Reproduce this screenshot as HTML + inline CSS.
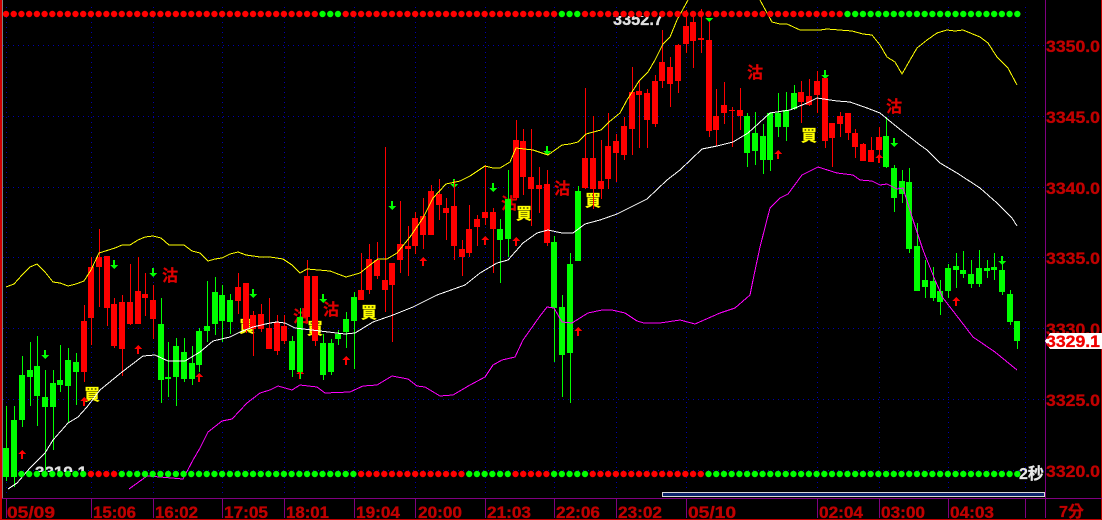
<!DOCTYPE html>
<html lang="zh-Hant"><head><meta charset="utf-8"><title>Chart</title>
<style>
html,body{margin:0;padding:0;background:#000;width:1102px;height:520px;overflow:hidden}
svg{display:block}
.ax{font:bold 17px "Liberation Sans",sans-serif;fill:#c00000;stroke:#c00000;stroke-width:.35}
.w{font:bold 17px "Liberation Sans",sans-serif;fill:#e0e0e0;stroke:#e0e0e0;stroke-width:.3}
.s{font:bold 16px "Liberation Sans","Noto Sans CJK TC",sans-serif;stroke-width:.25}
.l{fill:none;stroke-width:1}
</style></head><body>
<svg width="1102" height="520" viewBox="0 0 1102 520" xmlns="http://www.w3.org/2000/svg">
<defs><clipPath id="c"><rect x="600" y="16" width="80" height="12"/></clipPath><clipPath id="d"><rect x="30" y="460" width="70" height="12"/></clipPath></defs>
<rect width="1102" height="520" fill="#000"/>
<g shape-rendering="crispEdges">
<path stroke="#0000b0" stroke-width="1" stroke-dasharray="1 4" fill="none" d="M3 45.5H1045M3 116.5H1045M3 187.5H1045M3 257.5H1045M3 328.5H1045M3 399.5H1045M3 470.5H1045M6.5 7V496M91.5 7V496M153.5 7V496M222.5 7V496M284.5 7V496M354.5 7V496M415.5 7V496M485.5 7V496M554.5 7V496M616.5 7V496M686.5 7V496M817.5 7V496M879.5 7V496M948.5 7V496M1025.5 7V496"/>
</g>
<text class="w" x="613" y="25" textLength="50" lengthAdjust="spacingAndGlyphs" clip-path="url(#c)">3352.7</text>
<text class="w" x="35" y="478" textLength="52" lengthAdjust="spacingAndGlyphs" clip-path="url(#d)">3319.1</text>

<g class="s">
<g fill="#e00000" stroke="#e00000">
<text x="162" y="281">沽</text><text x="293" y="322">沽</text><text x="323" y="315">沽</text><text x="501" y="209">沽</text><text x="554" y="194">沽</text><text x="747" y="78">沽</text><text x="886" y="112">沽</text>
</g>
<g fill="#ffff00" stroke="#ffff00">
<text x="84" y="400">買</text><text x="239" y="332">買</text><text x="307" y="334">買</text><text x="361" y="318">買</text><text x="516" y="219">買</text><text x="585" y="206">買</text><text x="801" y="141">買</text>
</g>
</g>

<g shape-rendering="crispEdges">
<g fill="#ff0000">
<path id="u" d="M22 450l4 4h-3v5h-2v-5h-3zM84 397l4 4h-3v5h-2v-5h-3zM138 345l4 4h-3v5h-2v-5h-3zM199 373l4 4h-3v5h-2v-5h-3zM300 370l4 4h-3v5h-2v-5h-3zM346 356l4 4h-3v5h-2v-5h-3zM423 257l4 4h-3v5h-2v-5h-3zM485 236l4 4h-3v5h-2v-5h-3zM516 237l4 4h-3v5h-2v-5h-3zM578 327l4 4h-3v5h-2v-5h-3zM778 150l4 4h-3v5h-2v-5h-3zM879 154l4 4h-3v5h-2v-5h-3zM956 297l4 4h-3v5h-2v-5h-3z"/>
</g>
<g fill="#00ff00">
<path d="M45 359l4-4h-3v-5h-2v5h-3zM114 269l4-4h-3v-5h-2v5h-3zM153 277l4-4h-3v-5h-2v5h-3zM253 298l4-4h-3v-5h-2v5h-3zM323 303l4-4h-3v-5h-2v5h-3zM392 210l4-4h-3v-5h-2v5h-3zM454 188l4-4h-3v-5h-2v5h-3zM493 192l4-4h-3v-5h-2v5h-3zM547 155l4-4h-3v-5h-2v5h-3zM709 22l4-4h-8zM825 79l4-4h-3v-5h-2v5h-3zM894 147l4-4h-3v-5h-2v5h-3zM1002 265l4-4h-3v-5h-2v5h-3z"/>
</g>

<path fill="none" stroke="#00ff00" stroke-width="1" d="M6.5 406V481M14.5 406V487M22.5 356V427M30.5 342V406M37.5 336V426M45.5 370V477M53.5 370V450M60.5 345V392M68.5 348V423M76.5 353V405M161.5 298V403M168.5 342V397M176.5 338V406M184.5 338V382M192.5 346V385M199.5 328V372M207.5 281V342M215.5 277V335M222.5 285V342M230.5 294V334M292.5 336V377M300.5 308V379M323.5 334V380M331.5 339V375M338.5 330V345M346.5 312V348M354.5 292V369M500.5 219V283M508.5 170V257M554.5 236V362M562.5 295V397M570.5 253V403M578.5 186V261M747.5 113V167M755.5 112V165M763.5 124V174M770.5 112V171M778.5 93V137M786.5 92V141M794.5 85V110M886.5 117V168M894.5 165V212M902.5 170V203M909.5 168V253M917.5 223V291M925.5 260V298M933.5 267V301M940.5 280V315M948.5 264V298M956.5 253V288M963.5 251V278M971.5 260V288M979.5 250V287M987.5 260V278M994.5 253V280M1002.5 256V295M1010.5 290V325M1017.5 321V349"/>
<path fill="none" stroke="#00ff00" stroke-width="6" d="M6 448V477M14 420V477M22 375V420M30 370V377M37 366V396M45 397V407M53 383V407M60 380V385M68 360V386M76 362V372M161 324V380M168 377V379M176 346V377M184 352V379M192 363V379M199 331V365M207 326V331M215 292V324M222 295V321M230 300V322M292 341V370M300 317V372M323 343V375M331 343V372M338 334V339M346 319V332M354 297V321M500 229V240M508 199V239M554 242V308M562 307V355M570 264V353M578 191V261M747 116V153M755 133V151M763 136V160M770 113V160M778 113V127M786 110V127M794 93V109M886 136V167M894 168V198M902 181V194M909 182V249M917 246V291M925 280V287M933 281V298M940 291V302M948 268V291M956 266V270M963 270V274M971 274V284M979 268V284M987 268V271M994 267V270M1002 270V292M1010 294V322M1017 321V341"/>

<path fill="none" stroke="#ff0000" stroke-width="1" d="M84.5 305V382M91.5 257V345M99.5 229V307M107.5 256V326M114.5 298V348M122.5 295V376M130.5 264V325M138.5 257V324M145.5 273V316M153.5 285V339M238.5 273V314M246.5 283V333M253.5 311V356M261.5 304V332M269.5 298V349M277.5 315V355M284.5 315V344M307.5 260V323M315.5 276V346M361.5 253V300M369.5 244V294M377.5 242V279M385.5 147V312M392.5 263V342M400.5 201V273M408.5 226V276M415.5 212V254M423.5 198V249M431.5 185V235M439.5 179V220M446.5 198V240M454.5 180V260M462.5 240V276M469.5 205V257M477.5 215V246M485.5 165V225M493.5 208V273M516.5 120V200M523.5 129V195M531.5 129V226M539.5 167V213M547.5 170V246M585.5 88V189M593.5 116V209M601.5 140V199M608.5 113V189M616.5 134V182M624.5 117V160M632.5 67V155M639.5 81V148M647.5 89V148M655.5 75V127M662.5 30V88M670.5 57V107M678.5 44V93M686.5 10V53M693.5 15V68M701.5 9V53M709.5 22V137M716.5 89V146M724.5 82V124M732.5 107V147M740.5 88V130M801.5 81V123M809.5 79V106M817.5 71V113M825.5 78V148M832.5 123V167M840.5 112V137M848.5 113V140M855.5 129V158M863.5 143V161M871.5 137V162M879.5 127V163"/>
<path fill="none" stroke="#ff0000" stroke-width="6" d="M84 321V372M91 267V318M99 257V267M107 256V308M114 304V346M122 302V349M130 302V324M138 291V324M145 294V298M153 300V319M238 287V301M246 283V329M253 315V329M261 314V329M269 328V349M277 322V351M284 326V341M307 276V317M315 276V341M361 290V300M369 259V290M377 260V276M385 280V290M392 263V285M400 244V260M408 246V249M415 218V246M423 216V235M431 191V235M439 194V205M446 208V213M454 206V246M462 249V257M469 229V253M477 219V227M485 212V218M493 212V229M516 140V198M523 141V177M531 177V189M539 185V189M547 184V243M585 158V188M593 158V189M601 181V189M608 146V179M616 141V153M624 126V155M632 92V129M639 91V95M647 93V120M655 81V124M662 62V81M670 67V84M678 45V81M686 26V44M693 22V41M701 38V40M709 40V131M716 116V130M724 105V113M732 110V111M740 110V116M801 92V102M809 96V105M817 81V95M825 78V141M832 123V138M840 116V124M848 113V133M855 133V147M863 144V161M871 150V162M879 137V150"/>

<polyline class="l" stroke="#ffff00" points="6,287 14,284 22,275 30,267 37,264 45,272 53,282 60,283 68,286 76,284 84,281 91,270 99,253 115,248 122,245 130,245 138,240 145,237 153,236 161,238 169,245 184,245 192,251 200,253 208,261 215,259 222,258 230,254 238,252 246,255 260,257 270,257 283,259 292,265 300,273 307,269 330,271 346,277 360,273 370,265 378,259 387,259 397,253 410,237 423,218 433,198 446,184 460,181 470,176 485,166 493,168 500,168 510,162 516,148 533,150 548,155 562,145 570,144 578,142 586,134 601,130 609,122 620,113 627,100 639,81 648,72 655,60 663,44 670,37 677,20 688,0"/>
<polyline class="l" stroke="#ffff00" points="760,0 767,13 772,22 780,24 787,24 800,30 820,30 827,29 852,31 863,34 872,35 880,45 887,57 895,62 902,74 910,60 917,48 927,40 937,33 947,30 955,31 963,30 980,37 988,43 997,57 1008,68 1017,85"/>
<polyline class="l" stroke="#ffffff" points="8,489 17,483 30,468 45,453 53,440 68,423 78,417 87,407 100,390 122,372 143,356 155,355 168,361 185,361 200,352 213,341 230,337 240,332 253,327 270,323 277,322 285,323 295,328 320,331 345,334 355,333 373,322 393,315 413,307 437,295 465,285 480,273 497,263 508,260 523,243 537,233 548,230 562,233 573,233 585,224 600,220 617,214 635,205 647,199 667,180 680,170 702,149 717,146 733,142 748,133 770,113 790,110 807,103 817,98 837,101 850,102 867,108 880,113 897,127 920,145 927,150 940,163 957,173 980,188 997,203 1012,218 1017,226"/>
<polyline class="l" stroke="#ff00ff" points="129,489 147,476 160,477 183,479 193,460 200,448 208,432 222,421 232,419 247,403 260,393 270,390 278,386 292,390 300,385 317,387 325,393 350,392 363,386 377,385 392,376 408,379 417,386 425,387 440,396 453,395 470,385 485,377 493,365 502,360 515,357 523,340 540,316 547,307 554,308 562,322 572,323 588,313 602,310 612,310 625,313 637,321 644,323 660,323 680,320 695,324 720,313 735,308 750,295 753,280 760,247 770,208 780,198 788,194 802,175 818,167 837,173 853,175 860,180 872,181 880,185 887,184 897,189 903,188 913,220 923,250 935,280 943,298 960,320 973,337 995,352 1017,370"/>
</g>

<g fill="none" stroke-width="6.4" stroke-linecap="round" stroke-dasharray="0 7.72">
<path stroke="#ff0000" d="M6 14H314.9M345.68 14H554.2M585 14H839.8M90.92 474H114.2M361.12 474H461.6M515.52 474H546.5M592.72 474H700.9"/>
<path stroke="#00ff00" d="M322.52 14H338.1M561.84 14H577.4M847.48 14H1017.4M21.44 474H83.3M121.8 474H353.5M469.2 474H507.9M554.12 474H585.1M708.52 474H1017.4"/>
</g>

<text x="1019" y="479" style="font:bold 16px 'Liberation Sans','Noto Sans CJK TC',sans-serif;fill:#e8e8e8;stroke:#e8e8e8;stroke-width:.2">2秒</text>

<g shape-rendering="crispEdges">
<rect x="0" y="0" width="2" height="520" fill="#d00000"/>
<rect x="2" y="0" width="1" height="498" fill="#808080"/>
<rect x="1101" y="0" width="1" height="520" fill="#c00000"/>
<rect x="0" y="519" width="1102" height="1" fill="#c00000"/>
<rect x="662.5" y="492.5" width="382" height="4" fill="#0a246a" stroke="#d8d8d8"/>
<path fill="none" stroke="#800080" d="M2 498.5H1102M1045.5 0V518M6.5 498V518M91.5 498V518M153.5 498V518M222.5 498V518M284.5 498V518M354.5 498V518M415.5 498V518M485.5 498V518M554.5 498V518M616.5 498V518M686.5 498V518M817.5 498V518M879.5 498V518M948.5 498V518M1025.5 498V518"/>
</g>

<g class="ax">
<text x="1046" y="52" textLength="54" lengthAdjust="spacingAndGlyphs">3350.0</text>
<text x="1046" y="123" textLength="54" lengthAdjust="spacingAndGlyphs">3345.0</text>
<text x="1046" y="194" textLength="54" lengthAdjust="spacingAndGlyphs">3340.0</text>
<text x="1046" y="264" textLength="54" lengthAdjust="spacingAndGlyphs">3335.0</text>
<text x="1046" y="335" textLength="54" lengthAdjust="spacingAndGlyphs">3330.0</text>
<text x="1046" y="406" textLength="54" lengthAdjust="spacingAndGlyphs">3325.0</text>
<text x="1046" y="477" textLength="54" lengthAdjust="spacingAndGlyphs">3320.0</text>
<text x="7" y="518" textLength="48" lengthAdjust="spacingAndGlyphs">05/09</text>
<text x="93" y="518" textLength="43" lengthAdjust="spacingAndGlyphs">15:06</text>
<text x="155" y="518" textLength="43" lengthAdjust="spacingAndGlyphs">16:02</text>
<text x="224" y="518" textLength="44" lengthAdjust="spacingAndGlyphs">17:05</text>
<text x="286" y="518" textLength="43" lengthAdjust="spacingAndGlyphs">18:01</text>
<text x="356" y="518" textLength="44" lengthAdjust="spacingAndGlyphs">19:04</text>
<text x="418" y="518" textLength="44" lengthAdjust="spacingAndGlyphs">20:00</text>
<text x="487" y="518" textLength="44" lengthAdjust="spacingAndGlyphs">21:03</text>
<text x="556" y="518" textLength="44" lengthAdjust="spacingAndGlyphs">22:06</text>
<text x="618" y="518" textLength="44" lengthAdjust="spacingAndGlyphs">23:02</text>
<text x="688" y="518" textLength="48" lengthAdjust="spacingAndGlyphs">05/10</text>
<text x="819" y="518" textLength="44" lengthAdjust="spacingAndGlyphs">02:04</text>
<text x="881" y="518" textLength="44" lengthAdjust="spacingAndGlyphs">03:00</text>
<text x="950" y="518" textLength="44" lengthAdjust="spacingAndGlyphs">04:03</text>
<text x="1059" y="517" style="font:bold 16px 'Liberation Sans','Noto Sans CJK TC',sans-serif">7分</text>
</g>

<polygon points="1045,341 1050,333 1102,333 1102,349 1050,349" fill="#fff" shape-rendering="crispEdges"/>
<text x="1046" y="347" textLength="54" lengthAdjust="spacingAndGlyphs" style="font:bold 17px 'Liberation Sans',sans-serif;fill:#f00000;stroke:#f00000;stroke-width:.3">3329.1</text>
</svg>
</body></html>
